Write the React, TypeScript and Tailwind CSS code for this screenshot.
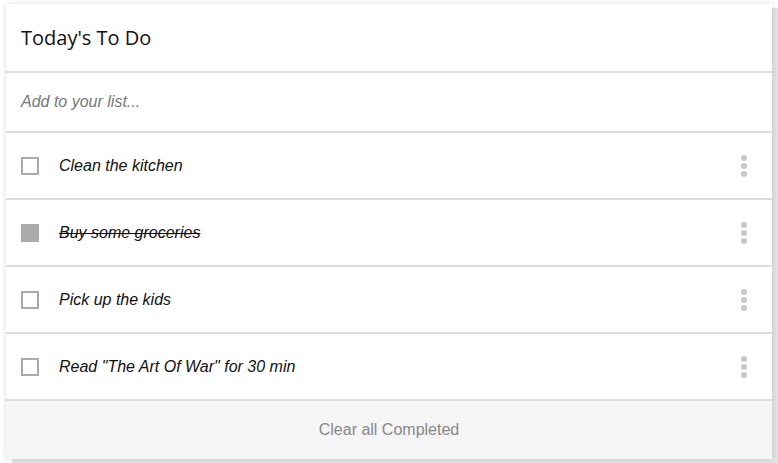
import React from "react";

const items = [
  { text: "Clean the kitchen", done: false },
  { text: "Buy some groceries", done: true },
  { text: "Pick up the kids", done: false },
  { text: 'Read "The Art Of War" for 30 min', done: false },
];

function Dots() {
  return (
    <svg width="8" height="24" viewBox="0 0 8 24" className="block">
      <circle cx="4" cy="4" r="3" fill="#c8c8c8" />
      <circle cx="4" cy="12" r="3" fill="#c8c8c8" />
      <circle cx="4" cy="20" r="3" fill="#c8c8c8" />
    </svg>
  );
}

export default function App() {
  return (
    <div className="w-[778px] h-[463px] bg-white overflow-hidden pt-[4px] pl-[6px]">
      <div className="w-[766px] h-[455px] bg-white flex flex-col shadow-[0_0_6px_rgba(0,0,0,0.14),6px_4px_0_#e2e2e2]">
        <div className="h-[69px] flex items-center px-[15px] border-b-2 border-[#dddddd] shrink-0">
          <span className="text-[20px] text-[#111] font-['Open_Sans',sans-serif] leading-none">Today's To Do</span>
        </div>
        <div className="h-[60px] flex items-center px-[15px] border-b-2 border-[#dddddd] shrink-0">
          <span className="text-[16px] italic text-[#777] font-['Liberation_Sans',Arial,sans-serif]">Add to your list...</span>
        </div>
        {items.map((it, i) => (
          <div
            key={i}
            className="h-[67px] flex items-center pl-[15px] pr-[24px] border-b-2 border-[#dddddd] shrink-0"
          >
            <div
              className={
                it.done
                  ? "w-[18px] h-[18px] bg-[#aaaaaa] border-2 border-[#aaaaaa] shrink-0"
                  : "w-[18px] h-[18px] bg-white border-2 border-[#aaaaaa] shrink-0"
              }
            />
            <span
              className={
                it.done
                  ? "ml-[20px] flex-1 text-[16px] italic text-[#111] line-through font-['Liberation_Sans',Arial,sans-serif]"
                  : "ml-[20px] flex-1 text-[16px] italic text-[#111] font-['Liberation_Sans',Arial,sans-serif]"
              }
            >
              {it.text}
            </span>
            <Dots />
          </div>
        ))}
        <div className="flex-1 bg-[#f5f5f5] flex items-center justify-center">
          <span className="text-[16px] text-[#888] font-['Liberation_Sans',Arial,sans-serif]">Clear all Completed</span>
        </div>
      </div>
    </div>
  );
}
